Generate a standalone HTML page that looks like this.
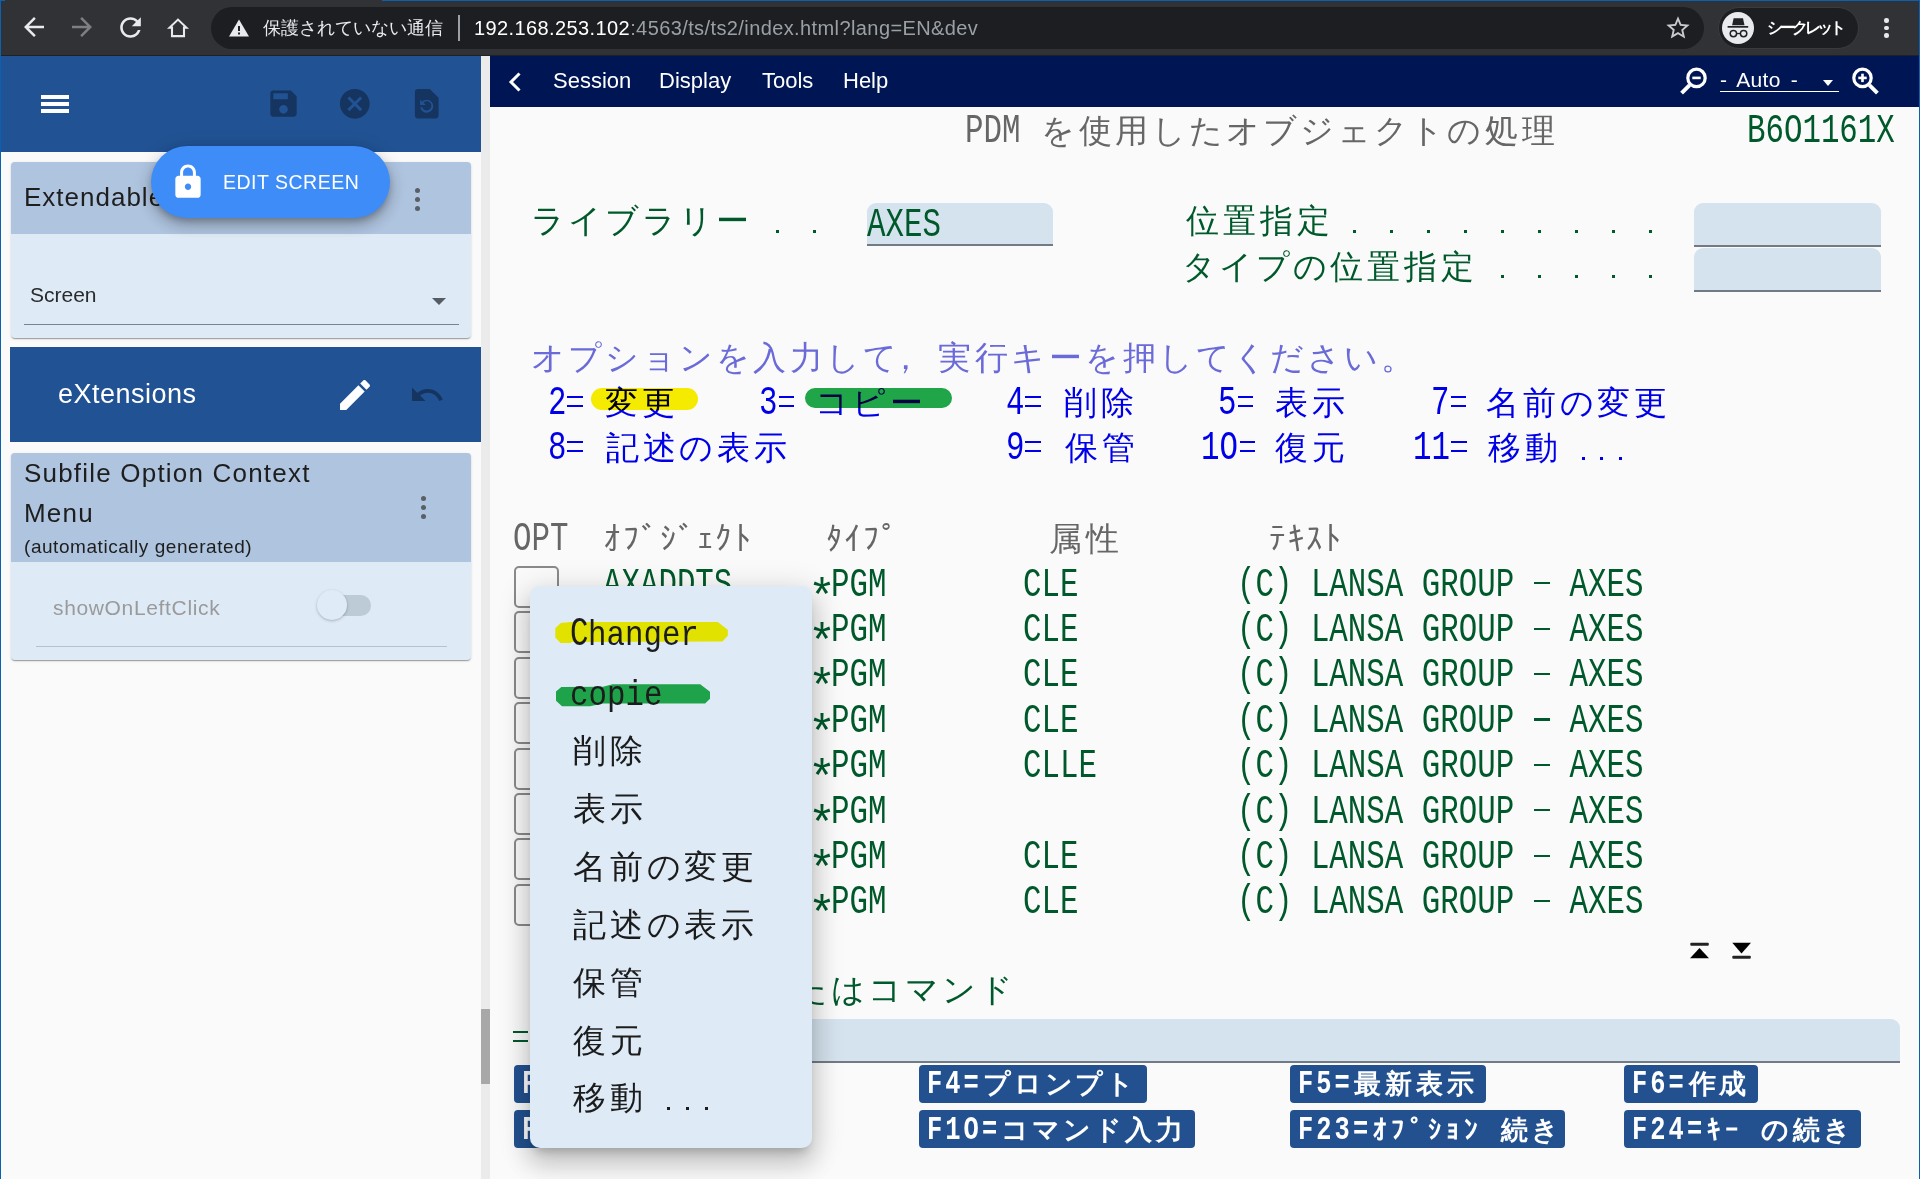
<!DOCTYPE html>
<html><head><meta charset="utf-8">
<style>
*{box-sizing:border-box}
html,body{margin:0;padding:0;width:1920px;height:1179px;overflow:hidden;background:#fafafa;font-family:"Liberation Sans",sans-serif}
.abs{position:absolute}
#chrome{position:absolute;left:0;top:0;width:1920px;height:56px;background:#313236}
#chrome .line{position:absolute;left:0;top:55px;width:1920px;height:1px;background:#202124}
#omni{position:absolute;left:211px;top:7px;width:1493px;height:42px;border-radius:21px;background:#1d1e21}
#incog{position:absolute;left:1718px;top:7px;width:141px;height:42px;border-radius:21px;background:#1d1e21;border:1px solid #3a3b3f}
.ctext{position:absolute;font-size:19px;color:#e8eaed;white-space:pre;line-height:22px}
#left{position:absolute;left:0;top:56px;width:481px;height:1123px;background:#fafafa}
#lhead{position:absolute;left:0;top:56px;width:481px;height:96px;background:#215293}
.card{position:absolute;left:11px;width:460px;background:#deebf7;border-radius:4px;overflow:hidden;box-shadow:0 2px 1px -1px rgba(0,0,0,.2),0 1px 1px 0 rgba(0,0,0,.14),0 1px 3px 0 rgba(0,0,0,.12)}
.chead{position:absolute;left:0;top:0;width:460px;background:#afc4df}
#scroll{position:absolute;left:481px;top:56px;width:9px;height:1123px;background:#ebebeb}
#thumb{position:absolute;left:481px;top:1009px;width:9px;height:75px;background:#a8a8a8}
#nav{position:absolute;left:490px;top:56px;width:1430px;height:51px;background:#001654}
.nav{position:absolute;top:68px;font-size:22px;color:#fff;line-height:26px;white-space:pre}
#term{position:absolute;left:490px;top:107px;width:1429px;height:1072px;background:#fafafa}
.fd{position:absolute;height:0;width:0}
.dot{position:absolute;top:37.5px;width:3px;height:3px;background:currentColor}
.bar{position:absolute;background:currentColor}
.t{position:absolute;white-space:pre;font-family:"Liberation Mono",monospace;line-height:40px;height:40px}
.L{font-size:40px;transform-origin:0 0}
.J{font-size:36px}
.fld{position:absolute;background:#d5e3ee;border-bottom:2px solid #727b85;border-radius:9px 9px 0 0}
.cb{position:absolute;width:45px;height:42px;border:2px solid #8a8a8a;border-radius:5px;background:#fafafa}
.fk{position:absolute;background:#23518f;border-radius:4px}
#menu{position:absolute;left:530px;top:586px;width:282px;height:562px;background:#deebf7;border-radius:10px;box-shadow:0 8px 10px -5px rgba(0,0,0,.2),0 16px 24px 2px rgba(0,0,0,.14),0 6px 30px 5px rgba(0,0,0,.12)}
.hl{position:absolute;mix-blend-mode:multiply;border-radius:12px}
.c0{position:absolute;white-space:pre;font-family:"Liberation Mono",monospace;line-height:40px;font-size:40px;top:10px;transform:scaleX(0.7696);transform-origin:0 0;letter-spacing:0.000px}
.c1{position:absolute;white-space:pre;font-family:"Liberation Mono",monospace;line-height:40px;font-size:33px;top:12px;width:36.94px;text-align:center}
.c2{position:absolute;white-space:pre;font-family:"Liberation Mono",monospace;line-height:40px;font-size:33px;top:12px;width:18.47px;text-align:center}
.c3{position:absolute;white-space:pre;font-family:"Liberation Mono",monospace;line-height:40px;font-size:33px;top:12px;transform:scaleX(0.7700);transform-origin:0 0;letter-spacing:3.966px}
.c4{position:absolute;white-space:pre;font-family:"Liberation Mono",monospace;line-height:40px;font-size:27px;top:13px;width:30.80px;text-align:center}
.c5{position:absolute;white-space:pre;font-family:"Liberation Mono",monospace;line-height:40px;font-size:27px;top:13px;width:18.30px;text-align:center}
.c6{position:absolute;white-space:pre;font-family:"Liberation Mono",monospace;line-height:40px;font-size:40px;top:10px;transform:scaleX(0.7917);transform-origin:0 0;letter-spacing:0.000px}
</style></head><body>
<!-- chrome toolbar -->
<div id="chrome"><div class="line"></div>
<svg class="abs" style="left:19px;top:12px" width="30" height="30" viewBox="0 0 24 24"><path fill="#e8eaed" d="M20 11H7.83l5.59-5.59L12 4l-8 8 8 8 1.41-1.41L7.83 13H20v-2z"/></svg>
<svg class="abs" style="left:67px;top:12px" width="30" height="30" viewBox="0 0 24 24"><path fill="#7d7f83" d="M4 11h12.17l-5.59-5.59L12 4l8 8-8 8-1.41-1.41L16.17 13H4v-2z"/></svg>
<svg class="abs" style="left:115px;top:12px" width="31" height="31" viewBox="0 0 24 24"><path fill="#e8eaed" d="M17.65 6.35C16.2 4.9 14.21 4 12 4c-4.42 0-7.99 3.58-7.99 8s3.57 8 7.99 8c3.73 0 6.84-2.55 7.73-6h-2.08c-.82 2.33-3.04 4-5.65 4-3.31 0-6-2.69-6-6s2.69-6 6-6c1.66 0 3.14.69 4.22 1.78L13 11h7V4l-2.35 2.35z"/></svg>
<svg class="abs" style="left:160px;top:10px" width="36" height="36" viewBox="160 10 36 36"><path fill="none" stroke="#e8eaed" stroke-width="2.1" stroke-linejoin="miter" d="M172 36.1V27.6H169.6L178 19.6L186.4 27.6H184V36.1Z"/></svg>
<div id="omni"></div>
<svg class="abs" style="left:228px;top:18px" width="22" height="20" viewBox="0 0 22 20"><path fill="#e8eaed" d="M11 1.5L21 18.5H1z"/><rect x="10" y="8" width="2" height="5" fill="#202124"/><rect x="10" y="14.5" width="2" height="2" fill="#202124"/></svg>
<div class="ctext" id="u1" style="left:263px;top:17px;font-size:18.4px">保護されていない通信</div>
<div class="abs" style="left:458px;top:15px;width:2px;height:26px;background:#9aa0a6"></div>
<div class="ctext" id="u2" style="left:474px;top:17px;color:#fff;font-size:20px;letter-spacing:.4px">192.168.253.102<span style="color:#9aa0a6">:4563/ts/ts2/index.html?lang=EN&amp;dev</span></div>
<svg class="abs" style="left:1664px;top:14px" width="28" height="28" viewBox="0 0 24 24"><path fill="#c8cacc" d="M22 9.24l-7.19-.62L12 2 9.19 8.63 2 9.24l5.46 4.73L5.82 21 12 17.27 18.18 21l-1.63-7.03L22 9.24zM12 15.4l-3.76 2.27 1-4.28-3.32-2.88 4.38-.38L12 6.1l1.71 4.04 4.38.38-3.32 2.88 1 4.28L12 15.4z"/></svg>
<div id="incog"></div>
<div class="abs" style="left:1722px;top:11.5px;width:32px;height:32px;border-radius:50%;background:#e8eaed"></div>
<svg class="abs" style="left:1722px;top:11.5px" width="32" height="32" viewBox="0 0 32 32"><path fill="#202124" d="M11.6 6.2h9.4l1.5 7.1H10.1z"/><rect x="5.6" y="14" width="20.6" height="1.7" fill="#202124"/><circle cx="11.4" cy="21.6" r="3.2" fill="none" stroke="#202124" stroke-width="1.5"/><circle cx="21.6" cy="21.6" r="3.2" fill="none" stroke="#202124" stroke-width="1.5"/><rect x="14.5" y="20.9" width="4" height="1.3" fill="#202124"/></svg>
<div class="ctext" style="left:1767px;top:17px;font-size:16px;color:#fff;letter-spacing:-3.5px;font-weight:bold">シークレット</div>
<div class="abs" style="left:1884px;top:18px;width:4.5px;height:4.5px;border-radius:50%;background:#e8eaed"></div>
<div class="abs" style="left:1884px;top:25.5px;width:4.5px;height:4.5px;border-radius:50%;background:#e8eaed"></div>
<div class="abs" style="left:1884px;top:33px;width:4.5px;height:4.5px;border-radius:50%;background:#e8eaed"></div>
</div>

<!-- left panel -->
<div id="left"></div>
<div id="lhead"></div>
<div class="abs" style="left:41px;top:95px;width:28px;height:3.5px;background:#fff"></div>
<div class="abs" style="left:41px;top:102.3px;width:28px;height:3.5px;background:#fff"></div>
<div class="abs" style="left:41px;top:109.3px;width:28px;height:3.5px;background:#fff"></div>
<svg class="abs" style="left:265.5px;top:86px" width="35" height="35" viewBox="0 0 24 24"><path fill="#15345f" d="M17 3H5c-1.11 0-2 .9-2 2v14c0 1.1.89 2 2 2h14c1.1 0 2-.9 2-2V7l-4-4zm-5 16c-1.66 0-3-1.34-3-3s1.34-3 3-3 3 1.34 3 3-1.34 3-3 3zm3-10H5V5h10v4z"/></svg>
<svg class="abs" style="left:337.2px;top:86px" width="35.6" height="35.6" viewBox="0 0 24 24"><path fill="#15345f" d="M12 2C6.47 2 2 6.47 2 12s4.47 10 10 10 10-4.47 10-10S17.53 2 12 2zm5 13.59L15.59 17 12 13.41 8.41 17 7 15.59 10.59 12 7 8.41 8.41 7 12 10.59 15.59 7 17 8.41 13.41 12 17 15.59z"/></svg>
<svg class="abs" style="left:409px;top:86px" width="35.5" height="35.5" viewBox="0 0 24 24"><path fill="#15345f" d="M14 2H6c-1.1 0-1.99.9-1.99 2L4 20c0 1.1.89 2 1.99 2H18c1.1 0 2-.9 2-2V8l-6-6zm-2 16c-2.21 0-4.05-1.6-4.4-3.71h1.41c.35 1.29 1.52 2.22 2.99 2.22 1.72 0 3.130-1.39 3.13-3.13S13.72 10.24 12 10.24c-.88 0-1.66.37-2.23.96l1.63 1.630H7.52V9.16l1.43 1.43C9.7 9.85 10.75 9.37 12 9.37c2.43 0 4.4 1.97 4.4 4.4S14.43 18 12 18z"/></svg>

<div class="card" style="top:162px;height:176px">
 <div class="chead" style="height:72px"></div>
 <div class="abs" style="left:13px;top:20px;font-size:26px;color:#1e1e1e;line-height:30px;letter-spacing:1px">Extendable</div>
 <div class="abs" style="left:403.5px;top:25.5px;width:5px;height:5px;border-radius:50%;background:#5a5f66"></div>
 <div class="abs" style="left:403.5px;top:34.5px;width:5px;height:5px;border-radius:50%;background:#5a5f66"></div>
 <div class="abs" style="left:403.5px;top:43.5px;width:5px;height:5px;border-radius:50%;background:#5a5f66"></div>
 <div class="abs" style="left:19px;top:120px;font-size:21px;color:#2a2a2a;line-height:26px">Screen</div>
 <div class="abs" style="left:421px;top:136px;width:0;height:0;border-left:7.5px solid transparent;border-right:7.5px solid transparent;border-top:7px solid #555c64"></div>
 <div class="abs" style="left:13px;top:161.6px;width:435px;height:1.3px;background:#7a828b"></div>
</div>
<div class="abs" style="left:151px;top:146px;width:239px;height:72px;border-radius:36px;background:#3d8cf7;box-shadow:0 4px 6px -1px rgba(0,0,0,.22),0 8px 14px 1px rgba(0,0,0,.16),0 2px 20px 0 rgba(0,0,0,.12)"></div>
<svg class="abs" style="left:168.5px;top:163px" width="38" height="38" viewBox="0 0 24 24"><path fill="#fff" d="M18 8h-1V6c0-2.76-2.24-5-5-5S7 3.240 7 6v2H6c-1.1 0-2 .9-2 2v10c0 1.1.9 2 2 2h12c1.1 0 2-.9 2-2V10c0-1.1-.9-2-2-2zm-6 9c-1.1 0-2-.9-2-2s.9-2 2-2 2 .9 2 2-.9 2-2 2zm3.1-9H8.9V6c0-1.71 1.39-3.1 3.1-3.1 1.71 0 3.1 1.39 3.1 3.1v2z"/></svg>
<div class="abs" style="left:223px;top:170px;font-size:19.5px;color:#fff;line-height:24px;letter-spacing:.5px;white-space:pre">EDIT SCREEN</div>

<div class="abs" style="left:10px;top:347px;width:471px;height:95px;background:#215293"></div>
<div class="abs" style="left:58px;top:379px;font-size:27px;color:#fff;line-height:30px;letter-spacing:.5px">eXtensions</div>
<svg class="abs" style="left:334.5px;top:374.5px" width="40" height="40" viewBox="0 0 24 24"><path fill="#fff" d="M3 17.25V21h3.75L17.81 9.94l-3.75-3.75L3 17.25zM20.71 7.04c.39-.39.39-1.02 0-1.41l-2.34-2.34c-.39-.39-1.02-.39-1.41 0l-1.83 1.83 3.75 3.75 1.83-1.83z"/></svg>
<svg class="abs" style="left:409px;top:377px" width="36" height="36" viewBox="0 0 24 24"><path fill="#15345f" d="M12.5 8c-2.65 0-5.05.99-6.9 2.6L2 7v9h9l-3.62-3.62c1.39-1.16 3.16-1.88 5.12-1.88 3.54 0 6.55 2.310 7.6 5.5l2.37-.78C21.08 11.030 17.15 8 12.5 8z"/></svg>

<div class="card" style="top:453px;height:207px">
 <div class="chead" style="height:109px"></div>
 <div class="abs" style="left:13px;top:0px;font-size:26px;color:#1e1e1e;line-height:40px;width:400px;letter-spacing:1.2px">Subfile Option Context<br>Menu</div>
 <div class="abs" style="left:13px;top:83px;font-size:19px;color:#1e1e1e;line-height:22px;white-space:pre;letter-spacing:.55px">(automatically generated)</div>
 <div class="abs" style="left:409.5px;top:43px;width:5px;height:5px;border-radius:50%;background:#5a5f66"></div>
 <div class="abs" style="left:409.5px;top:52px;width:5px;height:5px;border-radius:50%;background:#5a5f66"></div>
 <div class="abs" style="left:409.5px;top:61px;width:5px;height:5px;border-radius:50%;background:#5a5f66"></div>
 <div class="abs" style="left:42px;top:142px;font-size:21px;color:#9a9a9a;line-height:26px;white-space:pre;letter-spacing:.65px">showOnLeftClick</div>
 <div class="abs" style="left:310px;top:142px;width:50px;height:20.5px;border-radius:10.25px;background:#bccbd6"></div>
 <div class="abs" style="left:306px;top:137px;width:30px;height:30px;border-radius:50%;background:#dfecf7;box-shadow:0 1px 3px rgba(0,0,0,.25)"></div>
 <div class="abs" style="left:25px;top:192.5px;width:411px;height:1px;background:#b9c2ca"></div>
</div>
<div id="scroll"></div><div id="thumb"></div>

<!-- nav -->
<div id="nav"></div>
<svg class="abs" style="left:505px;top:70px" width="24" height="24" viewBox="0 0 24 24"><path fill="none" stroke="#fff" stroke-width="3" d="M17 3.5L8.5 12l8.5 8.5" transform="translate(-2.5 0)"/></svg>
<div class="nav" style="left:553px">Session</div>
<div class="nav" style="left:659px">Display</div>
<div class="nav" style="left:762px">Tools</div>
<div class="nav" style="left:843px">Help</div>
<svg class="abs" style="left:1670px;top:60px" width="40" height="40" viewBox="1670 60 40 40"><circle cx="1696.5" cy="77.9" r="8.7" fill="none" stroke="#fff" stroke-width="3.2"/><path d="M1689.6 85.2L1681.6 93.2" stroke="#fff" stroke-width="4" /><rect x="1692.3" y="76.6" width="8.4" height="2.6" fill="#fff"/></svg>
<div class="nav" style="left:1720px;top:67px;font-size:21px;word-spacing:4px;letter-spacing:.3px">- Auto -</div>
<div class="abs" style="left:1720px;top:91px;width:119px;height:1.2px;background:#fff"></div>
<div class="abs" style="left:1822.5px;top:79.5px;width:0;height:0;border-left:5.6px solid transparent;border-right:5.6px solid transparent;border-top:6px solid #fff"></div>
<svg class="abs" style="left:1845px;top:60px" width="40" height="40" viewBox="1845 60 40 40"><circle cx="1862.5" cy="77.9" r="8.7" fill="none" stroke="#fff" stroke-width="3.2"/><path d="M1869.4 85.2L1877.4 93.2" stroke="#fff" stroke-width="4" /><rect x="1858.3" y="76.6" width="8.4" height="2.6" fill="#fff"/><rect x="1861.2" y="73.7" width="2.6" height="8.4" fill="#fff"/></svg>

<div id="term"></div>
<!-- terminal fields -->
<div class="fld" style="left:866.5px;top:203px;width:186.5px;height:43px"></div>
<div class="fld" style="left:1694px;top:203px;width:187px;height:44px"></div>
<div class="fld" style="left:1694px;top:248px;width:187px;height:44px"></div>
<div class="fld" style="left:590px;top:1019px;width:1310px;height:44px"></div>
<div class="cb" style="left:514px;top:566px"></div>
<div class="cb" style="left:514px;top:611.4px"></div>
<div class="cb" style="left:514px;top:656.8px"></div>
<div class="cb" style="left:514px;top:702.2px"></div>
<div class="cb" style="left:514px;top:747.6px"></div>
<div class="cb" style="left:514px;top:793px"></div>
<div class="cb" style="left:514px;top:838.4px"></div>
<div class="cb" style="left:514px;top:883.8px"></div>
<div class="fd" style="left:964.80px;top:101.50px;color:#666666"><span class="c0" style="left:0.00px">PDM</span></div><div class="fd" style="left:1039.60px;top:101.50px;color:#666666"><span class="c1" style="left:0.00px">を</span><span class="c1" style="left:36.94px">使</span><span class="c1" style="left:73.88px">用</span><span class="c1" style="left:110.82px">し</span><span class="c1" style="left:147.76px">た</span><span class="c1" style="left:184.70px">オ</span><span class="c1" style="left:221.64px">ブ</span><span class="c1" style="left:258.58px">ジ</span><span class="c1" style="left:295.52px">ェ</span><span class="c1" style="left:332.46px">ク</span><span class="c1" style="left:369.40px">ト</span><span class="c1" style="left:406.34px">の</span><span class="c1" style="left:443.28px">処</span><span class="c1" style="left:480.22px">理</span></div><div class="fd" style="left:1746.75px;top:101.50px;color:#00592b"><span class="c0" style="left:0.00px">B6O1161X</span></div><div class="fd" style="left:529.40px;top:192.30px;color:#00592b"><span class="c1" style="left:0.00px">ラ</span><span class="c1" style="left:36.94px">イ</span><span class="c1" style="left:73.88px">ブ</span><span class="c1" style="left:110.82px">ラ</span><span class="c1" style="left:147.76px">リ</span><span class="c1" style="left:184.70px">ー</span></div><div class="fd" style="left:766.30px;top:192.30px;color:#00592b"><i class="dot" style="left:9.73px"></i><i class="dot" style="left:46.67px"></i></div><div class="fd" style="left:867.00px;top:196.30px;color:#00592b"><span class="c0" style="left:0.00px">AXES</span></div><div class="fd" style="left:1184.20px;top:192.30px;color:#00592b"><span class="c1" style="left:0.00px">位</span><span class="c1" style="left:36.94px">置</span><span class="c1" style="left:73.88px">指</span><span class="c1" style="left:110.82px">定</span></div><div class="fd" style="left:1343.40px;top:192.30px;color:#00592b"><i class="dot" style="left:9.73px"></i><i class="dot" style="left:46.67px"></i><i class="dot" style="left:83.61px"></i><i class="dot" style="left:120.55px"></i><i class="dot" style="left:157.50px"></i><i class="dot" style="left:194.44px"></i><i class="dot" style="left:231.38px"></i><i class="dot" style="left:268.31px"></i><i class="dot" style="left:305.25px"></i></div><div class="fd" style="left:1180.40px;top:237.70px;color:#00592b"><span class="c1" style="left:0.00px">タ</span><span class="c1" style="left:36.94px">イ</span><span class="c1" style="left:73.88px">プ</span><span class="c1" style="left:110.82px">の</span><span class="c1" style="left:147.76px">位</span><span class="c1" style="left:184.70px">置</span><span class="c1" style="left:221.64px">指</span><span class="c1" style="left:258.58px">定</span></div><div class="fd" style="left:1491.20px;top:237.70px;color:#00592b"><i class="dot" style="left:9.73px"></i><i class="dot" style="left:46.67px"></i><i class="dot" style="left:83.61px"></i><i class="dot" style="left:120.55px"></i><i class="dot" style="left:157.50px"></i></div><div class="fd" style="left:529.50px;top:328.50px;color:#6a6ad8"><span class="c1" style="left:0.00px">オ</span><span class="c1" style="left:36.94px">プ</span><span class="c1" style="left:73.88px">シ</span><span class="c1" style="left:110.82px">ョ</span><span class="c1" style="left:147.76px">ン</span><span class="c1" style="left:184.70px">を</span><span class="c1" style="left:221.64px">入</span><span class="c1" style="left:258.58px">力</span><span class="c1" style="left:295.52px">し</span><span class="c1" style="left:332.46px">て</span><span class="c1" style="left:357.40px">，</span><span class="c1" style="left:406.34px">実</span><span class="c1" style="left:443.28px">行</span><span class="c1" style="left:480.22px">キ</span><span class="c1" style="left:517.16px">ー</span><span class="c1" style="left:554.10px">を</span><span class="c1" style="left:591.04px">押</span><span class="c1" style="left:627.98px">し</span><span class="c1" style="left:664.92px">て</span><span class="c1" style="left:701.86px">く</span><span class="c1" style="left:738.80px">だ</span><span class="c1" style="left:775.74px">さ</span><span class="c1" style="left:812.68px">い</span><span class="c1" style="left:849.62px">。</span></div><div class="fd" style="left:547.50px;top:373.90px;color:#0000e8"><span class="c0" style="left:0.00px">2</span><i class="bar" style="left:19.87px;top:21.75px;width:15.6px;height:2.2px"></i><i class="bar" style="left:19.87px;top:30.75px;width:15.6px;height:2.2px"></i></div><div class="fd" style="left:603.00px;top:373.90px;color:#0000e8"><span class="c1" style="left:0.00px">変</span><span class="c1" style="left:36.94px">更</span></div><div class="fd" style="left:759.00px;top:373.90px;color:#0000e8"><span class="c0" style="left:0.00px">3</span><i class="bar" style="left:19.87px;top:21.75px;width:15.6px;height:2.2px"></i><i class="bar" style="left:19.87px;top:30.75px;width:15.6px;height:2.2px"></i></div><div class="fd" style="left:814.00px;top:373.90px;color:#0000e8"><span class="c1" style="left:0.00px">コ</span><span class="c1" style="left:36.94px">ピ</span><span class="c1" style="left:73.88px">ー</span></div><div class="fd" style="left:1005.60px;top:373.90px;color:#0000e8"><span class="c0" style="left:0.00px">4</span><i class="bar" style="left:19.87px;top:21.75px;width:15.6px;height:2.2px"></i><i class="bar" style="left:19.87px;top:30.75px;width:15.6px;height:2.2px"></i></div><div class="fd" style="left:1061.80px;top:373.90px;color:#0000e8"><span class="c1" style="left:0.00px">削</span><span class="c1" style="left:36.94px">除</span></div><div class="fd" style="left:1217.70px;top:373.90px;color:#0000e8"><span class="c0" style="left:0.00px">5</span><i class="bar" style="left:19.87px;top:21.75px;width:15.6px;height:2.2px"></i><i class="bar" style="left:19.87px;top:30.75px;width:15.6px;height:2.2px"></i></div><div class="fd" style="left:1273.00px;top:373.90px;color:#0000e8"><span class="c1" style="left:0.00px">表</span><span class="c1" style="left:36.94px">示</span></div><div class="fd" style="left:1431.00px;top:373.90px;color:#0000e8"><span class="c0" style="left:0.00px">7</span><i class="bar" style="left:19.87px;top:21.75px;width:15.6px;height:2.2px"></i><i class="bar" style="left:19.87px;top:30.75px;width:15.6px;height:2.2px"></i></div><div class="fd" style="left:1484.20px;top:373.90px;color:#0000e8"><span class="c1" style="left:0.00px">名</span><span class="c1" style="left:36.94px">前</span><span class="c1" style="left:73.88px">の</span><span class="c1" style="left:110.82px">変</span><span class="c1" style="left:147.76px">更</span></div><div class="fd" style="left:547.50px;top:419.30px;color:#0000e8"><span class="c0" style="left:0.00px">8</span><i class="bar" style="left:19.87px;top:21.75px;width:15.6px;height:2.2px"></i><i class="bar" style="left:19.87px;top:30.75px;width:15.6px;height:2.2px"></i></div><div class="fd" style="left:604.00px;top:419.30px;color:#0000e8"><span class="c1" style="left:0.00px">記</span><span class="c1" style="left:36.94px">述</span><span class="c1" style="left:73.88px">の</span><span class="c1" style="left:110.82px">表</span><span class="c1" style="left:147.76px">示</span></div><div class="fd" style="left:1005.60px;top:419.30px;color:#0000e8"><span class="c0" style="left:0.00px">9</span><i class="bar" style="left:19.87px;top:21.75px;width:15.6px;height:2.2px"></i><i class="bar" style="left:19.87px;top:30.75px;width:15.6px;height:2.2px"></i></div><div class="fd" style="left:1062.90px;top:419.30px;color:#0000e8"><span class="c1" style="left:0.00px">保</span><span class="c1" style="left:36.94px">管</span></div><div class="fd" style="left:1201.30px;top:419.30px;color:#0000e8"><span class="c0" style="left:0.00px">1O</span><i class="bar" style="left:38.34px;top:21.75px;width:15.6px;height:2.2px"></i><i class="bar" style="left:38.34px;top:30.75px;width:15.6px;height:2.2px"></i></div><div class="fd" style="left:1273.00px;top:419.30px;color:#0000e8"><span class="c1" style="left:0.00px">復</span><span class="c1" style="left:36.94px">元</span></div><div class="fd" style="left:1412.70px;top:419.30px;color:#0000e8"><span class="c0" style="left:0.00px">11</span><i class="bar" style="left:38.34px;top:21.75px;width:15.6px;height:2.2px"></i><i class="bar" style="left:38.34px;top:30.75px;width:15.6px;height:2.2px"></i></div><div class="fd" style="left:1485.60px;top:419.30px;color:#0000e8"><span class="c1" style="left:0.00px">移</span><span class="c1" style="left:36.94px">動</span></div><div class="fd" style="left:1572.10px;top:419.30px;color:#0000e8"><i class="dot" style="left:9.73px"></i><i class="dot" style="left:28.20px"></i><i class="dot" style="left:46.67px"></i></div><div class="fd" style="left:512.50px;top:510.10px;color:#666666"><span class="c0" style="left:0.00px">OPT</span></div><div class="fd" style="left:603.50px;top:510.10px;color:#666666"><span class="c2" style="left:0.00px">ｵ</span><span class="c2" style="left:18.47px">ﾌ</span><span class="c2" style="left:36.94px">ﾞ</span><span class="c2" style="left:55.41px">ｼ</span><span class="c2" style="left:73.88px">ﾞ</span><span class="c2" style="left:92.35px">ｪ</span><span class="c2" style="left:110.82px">ｸ</span><span class="c2" style="left:129.29px">ﾄ</span></div><div class="fd" style="left:825.00px;top:510.10px;color:#666666"><span class="c2" style="left:0.00px">ﾀ</span><span class="c2" style="left:18.47px">ｲ</span><span class="c2" style="left:36.94px">ﾌ</span><span class="c2" style="left:55.41px">ﾟ</span></div><div class="fd" style="left:1047.00px;top:510.10px;color:#666666"><span class="c1" style="left:0.00px">属</span><span class="c1" style="left:36.94px">性</span></div><div class="fd" style="left:1268.30px;top:510.10px;color:#666666"><span class="c2" style="left:0.00px">ﾃ</span><span class="c2" style="left:18.47px">ｷ</span><span class="c2" style="left:36.94px">ｽ</span><span class="c2" style="left:55.41px">ﾄ</span></div><div class="fd" style="left:602.80px;top:555.50px;color:#00592b"><span class="c0" style="left:0.00px">AXADDTS</span></div><div class="fd" style="left:812.50px;top:555.50px;color:#00592b"><span class="c0" style="left:0.00px;transform:translate(-4.9px,10.3px) scale(1.163,1.194)">*</span><span class="c0" style="left:18.47px">PGM</span></div><div class="fd" style="left:1023.00px;top:555.50px;color:#00592b"><span class="c0" style="left:0.00px">CLE</span></div><div class="fd" style="left:1237.00px;top:555.50px;color:#00592b"><span class="c0" style="left:0.00px">(C) LANSA GROUP </span><i class="bar" style="left:296.85px;top:26.8px;width:15.8px;height:2.1px"></i><span class="c0" style="left:313.99px"> AXES</span></div><div class="fd" style="left:602.80px;top:600.90px;color:#00592b"><span class="c0" style="left:0.00px">AXCHGDTA</span></div><div class="fd" style="left:812.50px;top:600.90px;color:#00592b"><span class="c0" style="left:0.00px;transform:translate(-4.9px,10.3px) scale(1.163,1.194)">*</span><span class="c0" style="left:18.47px">PGM</span></div><div class="fd" style="left:1023.00px;top:600.90px;color:#00592b"><span class="c0" style="left:0.00px">CLE</span></div><div class="fd" style="left:1237.00px;top:600.90px;color:#00592b"><span class="c0" style="left:0.00px">(C) LANSA GROUP </span><i class="bar" style="left:296.85px;top:26.8px;width:15.8px;height:2.1px"></i><span class="c0" style="left:313.99px"> AXES</span></div><div class="fd" style="left:602.80px;top:646.30px;color:#00592b"><span class="c0" style="left:0.00px">AXCRTUSR</span></div><div class="fd" style="left:812.50px;top:646.30px;color:#00592b"><span class="c0" style="left:0.00px;transform:translate(-4.9px,10.3px) scale(1.163,1.194)">*</span><span class="c0" style="left:18.47px">PGM</span></div><div class="fd" style="left:1023.00px;top:646.30px;color:#00592b"><span class="c0" style="left:0.00px">CLE</span></div><div class="fd" style="left:1237.00px;top:646.30px;color:#00592b"><span class="c0" style="left:0.00px">(C) LANSA GROUP </span><i class="bar" style="left:296.85px;top:26.8px;width:15.8px;height:2.1px"></i><span class="c0" style="left:313.99px"> AXES</span></div><div class="fd" style="left:602.80px;top:691.70px;color:#00592b"><span class="c0" style="left:0.00px">AXDLTUSR</span></div><div class="fd" style="left:812.50px;top:691.70px;color:#00592b"><span class="c0" style="left:0.00px;transform:translate(-4.9px,10.3px) scale(1.163,1.194)">*</span><span class="c0" style="left:18.47px">PGM</span></div><div class="fd" style="left:1023.00px;top:691.70px;color:#00592b"><span class="c0" style="left:0.00px">CLE</span></div><div class="fd" style="left:1237.00px;top:691.70px;color:#00592b"><span class="c0" style="left:0.00px">(C) LANSA GROUP </span><i class="bar" style="left:296.85px;top:26.8px;width:15.8px;height:2.1px"></i><span class="c0" style="left:313.99px"> AXES</span></div><div class="fd" style="left:602.80px;top:737.10px;color:#00592b"><span class="c0" style="left:0.00px">AXLSTOBJ</span></div><div class="fd" style="left:812.50px;top:737.10px;color:#00592b"><span class="c0" style="left:0.00px;transform:translate(-4.9px,10.3px) scale(1.163,1.194)">*</span><span class="c0" style="left:18.47px">PGM</span></div><div class="fd" style="left:1023.00px;top:737.10px;color:#00592b"><span class="c0" style="left:0.00px">CLLE</span></div><div class="fd" style="left:1237.00px;top:737.10px;color:#00592b"><span class="c0" style="left:0.00px">(C) LANSA GROUP </span><i class="bar" style="left:296.85px;top:26.8px;width:15.8px;height:2.1px"></i><span class="c0" style="left:313.99px"> AXES</span></div><div class="fd" style="left:602.80px;top:782.50px;color:#00592b"><span class="c0" style="left:0.00px">AXRUNCMD</span></div><div class="fd" style="left:812.50px;top:782.50px;color:#00592b"><span class="c0" style="left:0.00px;transform:translate(-4.9px,10.3px) scale(1.163,1.194)">*</span><span class="c0" style="left:18.47px">PGM</span></div><div class="fd" style="left:1237.00px;top:782.50px;color:#00592b"><span class="c0" style="left:0.00px">(C) LANSA GROUP </span><i class="bar" style="left:296.85px;top:26.8px;width:15.8px;height:2.1px"></i><span class="c0" style="left:313.99px"> AXES</span></div><div class="fd" style="left:602.80px;top:827.90px;color:#00592b"><span class="c0" style="left:0.00px">AXSNDMSG</span></div><div class="fd" style="left:812.50px;top:827.90px;color:#00592b"><span class="c0" style="left:0.00px;transform:translate(-4.9px,10.3px) scale(1.163,1.194)">*</span><span class="c0" style="left:18.47px">PGM</span></div><div class="fd" style="left:1023.00px;top:827.90px;color:#00592b"><span class="c0" style="left:0.00px">CLE</span></div><div class="fd" style="left:1237.00px;top:827.90px;color:#00592b"><span class="c0" style="left:0.00px">(C) LANSA GROUP </span><i class="bar" style="left:296.85px;top:26.8px;width:15.8px;height:2.1px"></i><span class="c0" style="left:313.99px"> AXES</span></div><div class="fd" style="left:602.80px;top:873.30px;color:#00592b"><span class="c0" style="left:0.00px">AXUPDDTA</span></div><div class="fd" style="left:812.50px;top:873.30px;color:#00592b"><span class="c0" style="left:0.00px;transform:translate(-4.9px,10.3px) scale(1.163,1.194)">*</span><span class="c0" style="left:18.47px">PGM</span></div><div class="fd" style="left:1023.00px;top:873.30px;color:#00592b"><span class="c0" style="left:0.00px">CLE</span></div><div class="fd" style="left:1237.00px;top:873.30px;color:#00592b"><span class="c0" style="left:0.00px">(C) LANSA GROUP </span><i class="bar" style="left:296.85px;top:26.8px;width:15.8px;height:2.1px"></i><span class="c0" style="left:313.99px"> AXES</span></div><div class="fd" style="left:533.96px;top:961.10px;color:#00592b"><span class="c1" style="left:0.00px">パ</span><span class="c1" style="left:36.94px">ラ</span><span class="c1" style="left:73.88px">メ</span><span class="c1" style="left:110.82px">ー</span><span class="c1" style="left:147.76px">タ</span><span class="c1" style="left:184.70px">ー</span><span class="c1" style="left:221.64px">ま</span><span class="c1" style="left:258.58px">た</span><span class="c1" style="left:295.52px">は</span><span class="c1" style="left:332.46px">コ</span><span class="c1" style="left:369.40px">マ</span><span class="c1" style="left:406.34px">ン</span><span class="c1" style="left:443.28px">ド</span></div><div class="fd" style="left:511.50px;top:1009.50px;color:#00592b"><i class="bar" style="left:1.40px;top:21.75px;width:15.6px;height:2.2px"></i><i class="bar" style="left:1.40px;top:30.75px;width:15.6px;height:2.2px"></i><i class="bar" style="left:19.87px;top:21.75px;width:15.6px;height:2.2px"></i><i class="bar" style="left:19.87px;top:30.75px;width:15.6px;height:2.2px"></i><i class="bar" style="left:38.34px;top:21.75px;width:15.6px;height:2.2px"></i><i class="bar" style="left:38.34px;top:30.75px;width:15.6px;height:2.2px"></i><span class="c0" style="left:55.41px">&gt;</span></div>
<svg class="abs" style="left:1689px;top:942px" width="21" height="18" viewBox="0 0 21 18"><rect x="1.3" y="0.7" width="18.5" height="3" rx="1" fill="#222"/><path d="M10.5 6L20 16.3H1z" fill="#000"/></svg>
<svg class="abs" style="left:1731px;top:942px" width="21" height="18" viewBox="0 0 21 18"><rect x="1.3" y="13.7" width="18.5" height="3" rx="1" fill="#222"/><path d="M1.3 0.7H20L10.5 11.5z" fill="#000"/></svg>
<div class="fk" style="left:513.5px;top:1065px;width:230px;height:37.5px"></div><div class="fk" style="left:918.6px;top:1065px;width:228.1px;height:37.5px"></div><div class="fk" style="left:1289.5px;top:1065px;width:196.5px;height:37.5px"></div><div class="fk" style="left:1623.7px;top:1065px;width:134.3px;height:37.5px"></div><div class="fk" style="left:513.5px;top:1110.3px;width:290px;height:37.5px"></div><div class="fk" style="left:918.6px;top:1110.3px;width:276.6px;height:37.5px"></div><div class="fk" style="left:1289.5px;top:1110.3px;width:275.8px;height:37.5px"></div><div class="fk" style="left:1623.7px;top:1110.3px;width:237px;height:37.5px"></div><div class="fd" style="left:521.65px;top:1053.10px;color:#ffffff;font-weight:bold"><span class="c3" style="left:0.00px">F3=</span><span class="c4" style="left:54.90px">終</span><span class="c4" style="left:85.70px">了</span></div><div class="fd" style="left:926.75px;top:1053.10px;color:#ffffff;font-weight:bold"><span class="c3" style="left:0.00px">F4=</span><span class="c4" style="left:54.90px">プ</span><span class="c4" style="left:85.70px">ロ</span><span class="c4" style="left:116.50px">ン</span><span class="c4" style="left:147.30px">プ</span><span class="c4" style="left:178.10px">ト</span></div><div class="fd" style="left:1297.65px;top:1053.10px;color:#ffffff;font-weight:bold"><span class="c3" style="left:0.00px">F5=</span><span class="c4" style="left:54.90px">最</span><span class="c4" style="left:85.70px">新</span><span class="c4" style="left:116.50px">表</span><span class="c4" style="left:147.30px">示</span></div><div class="fd" style="left:1631.85px;top:1053.10px;color:#ffffff;font-weight:bold"><span class="c3" style="left:0.00px">F6=</span><span class="c4" style="left:54.90px">作</span><span class="c4" style="left:85.70px">成</span></div><div class="fd" style="left:521.65px;top:1098.90px;color:#ffffff;font-weight:bold"><span class="c3" style="left:0.00px">F9=</span><span class="c4" style="left:54.90px">コ</span><span class="c4" style="left:85.70px">マ</span><span class="c4" style="left:116.50px">ン</span><span class="c4" style="left:147.30px">ド</span><span class="c4" style="left:178.10px">の</span><span class="c4" style="left:208.90px">複</span><span class="c4" style="left:239.70px">写</span></div><div class="fd" style="left:926.75px;top:1098.90px;color:#ffffff;font-weight:bold"><span class="c3" style="left:0.00px">F1O=</span><span class="c4" style="left:73.20px">コ</span><span class="c4" style="left:104.00px">マ</span><span class="c4" style="left:134.80px">ン</span><span class="c4" style="left:165.60px">ド</span><span class="c4" style="left:196.40px">入</span><span class="c4" style="left:227.20px">力</span></div><div class="fd" style="left:1297.65px;top:1098.90px;color:#ffffff;font-weight:bold"><span class="c3" style="left:0.00px">F23=</span><span class="c5" style="left:73.20px">ｵ</span><span class="c5" style="left:91.50px">ﾌ</span><span class="c5" style="left:109.80px">ﾟ</span><span class="c5" style="left:128.10px">ｼ</span><span class="c5" style="left:146.40px">ｮ</span><span class="c5" style="left:164.70px">ﾝ</span><span class="c4" style="left:201.30px">続</span><span class="c4" style="left:232.10px">き</span></div><div class="fd" style="left:1631.85px;top:1098.90px;color:#ffffff;font-weight:bold"><span class="c3" style="left:0.00px">F24=</span><span class="c5" style="left:73.20px">ｷ</span><span class="c5" style="left:91.50px">ｰ</span><span class="c4" style="left:128.10px">の</span><span class="c4" style="left:158.90px">続</span><span class="c4" style="left:189.70px">き</span></div>
<div class="hl" style="left:591px;top:388px;width:107px;height:21.5px;background:#faf000"></div>
<div class="hl" style="left:805px;top:388px;width:147px;height:20px;background:#20a84a"></div>
<div id="menu"></div>
<svg class="abs" style="left:540px;top:610px" width="200" height="110" viewBox="540 610 200 110"><path fill="#e2e200" d="M555.3 628.3L560.8 623.1L570.7 622.1L717.8 621.9L727.8 629.8L727.8 635.8L722.4 641.5L571.5 642.1L571 643L560.6 643L555.3 637.6Z"/><path fill="#1fa34a" d="M556 691.5L561.3 686.9L603 686.8L612.5 684.2L700.2 684.2L710 691.8L710 698.8L705.1 703.6L603 703.6L590 706.3L562 706.3L556 700.7Z"/></svg>
<div class="fd" style="left:569.80px;top:605.30px;color:#1c1c1c"><span class="c0" style="left:0.00px">C</span><span class="c0" style="left:18.47px;transform:scale(0.7696,0.875);transform-origin:0 30px">hanger</span></div><div class="fd" style="left:570.30px;top:664.70px;color:#1c1c1c"><span class="c0" style="left:0.00px;transform:scale(0.7696,0.875);transform-origin:0 30px">copie</span></div><div class="fd" style="left:571.50px;top:721.70px;color:#1c1c1c"><span class="c1" style="left:0.00px">削</span><span class="c1" style="left:36.94px">除</span></div><div class="fd" style="left:571.50px;top:779.80px;color:#1c1c1c"><span class="c1" style="left:0.00px">表</span><span class="c1" style="left:36.94px">示</span></div><div class="fd" style="left:571.50px;top:837.90px;color:#1c1c1c"><span class="c1" style="left:0.00px">名</span><span class="c1" style="left:36.94px">前</span><span class="c1" style="left:73.88px">の</span><span class="c1" style="left:110.82px">変</span><span class="c1" style="left:147.76px">更</span></div><div class="fd" style="left:571.50px;top:896.00px;color:#1c1c1c"><span class="c1" style="left:0.00px">記</span><span class="c1" style="left:36.94px">述</span><span class="c1" style="left:73.88px">の</span><span class="c1" style="left:110.82px">表</span><span class="c1" style="left:147.76px">示</span></div><div class="fd" style="left:571.50px;top:953.60px;color:#1c1c1c"><span class="c1" style="left:0.00px">保</span><span class="c1" style="left:36.94px">管</span></div><div class="fd" style="left:571.50px;top:1012.10px;color:#1c1c1c"><span class="c1" style="left:0.00px">復</span><span class="c1" style="left:36.94px">元</span></div><div class="fd" style="left:571.50px;top:1069.10px;color:#1c1c1c"><span class="c1" style="left:0.00px">移</span><span class="c1" style="left:36.94px">動</span></div><div class="fd" style="left:656.85px;top:1069.10px;color:#1c1c1c"><i class="dot" style="left:10.00px"></i><i class="dot" style="left:29.00px"></i><i class="dot" style="left:48.00px"></i></div>
<!-- window frame -->
<div class="abs" style="left:0;top:0;width:1px;height:1179px;background:#0b60b2"></div>
<div class="abs" style="left:1919px;top:0;width:1px;height:1179px;background:#0b60b2"></div>
<div class="abs" style="left:382px;top:0;width:1538px;height:1px;background:#0b60b2"></div>
<div class="abs" style="left:0;top:0;width:5px;height:1px;background:#0b60b2"></div>
</body></html>
